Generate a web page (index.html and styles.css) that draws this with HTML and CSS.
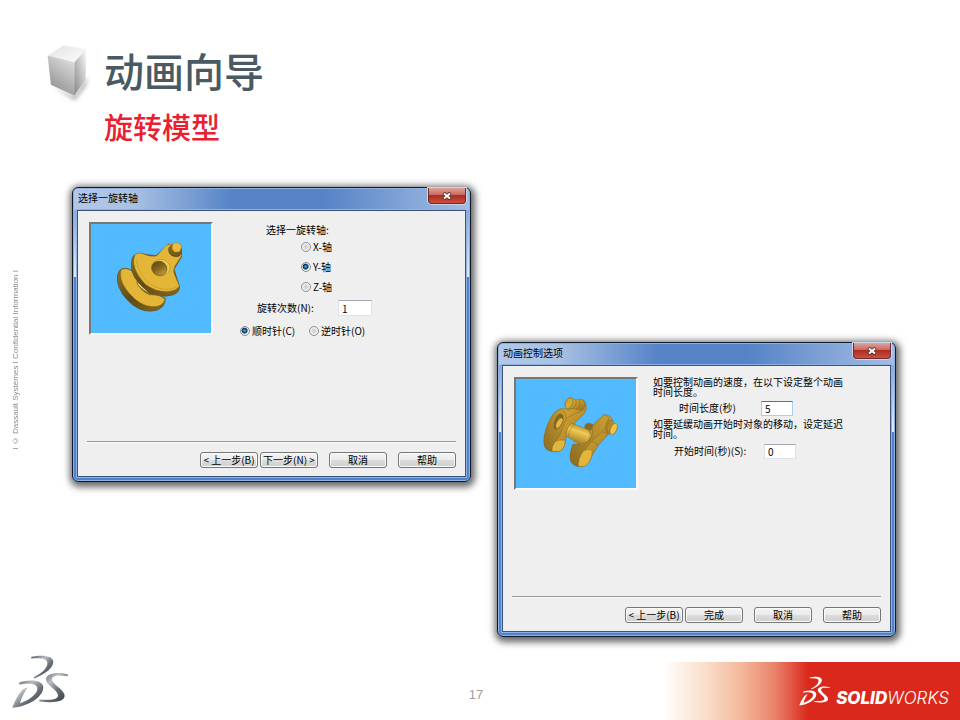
FILE: index.html
```html
<!DOCTYPE html>
<html lang="zh-CN">
<head>
<meta charset="utf-8">
<meta name="viewport" content="width=device-width, initial-scale=1">
<title>动画向导</title>
<link rel="stylesheet" href="styles.css">
</head>
<body>
<div class="slide">
  <aside class="rail">I © Dassault Systèmes I Confidential Information I</aside>

  <header class="heading">
    <svg class="cube" viewBox="40 35 140 190" aria-hidden="true">
      <defs>
        <linearGradient id="cubeTop" x1="0" y1="0" x2="1" y2="1"><stop offset="0" stop-color="#e2e2e2"/><stop offset="1" stop-color="#fdfdfd"/></linearGradient>
        <linearGradient id="cubeLeft" x1=".8" y1="0" x2=".3" y2="1"><stop offset="0" stop-color="#e0e0e0"/><stop offset="1" stop-color="#8e8e8e"/></linearGradient>
        <linearGradient id="cubeRight" x1="1" y1="0" x2="0" y2="1"><stop offset="0" stop-color="#fafafa"/><stop offset="1" stop-color="#858585"/></linearGradient>
        <filter id="soft" x="-30%" y="-30%" width="160%" height="160%"><feGaussianBlur stdDeviation="6"/></filter>
      </defs>
      <path d="M62 168 L130 200 L172 140 L164 168 L132 210Z" fill="#999" filter="url(#soft)"/>
      <path d="M50 76 L98 45 L166 57 L131 96Z" fill="url(#cubeTop)"/>
      <path d="M50 76 L131 96 L130 196 L60 164Z" fill="url(#cubeLeft)"/>
      <path d="M131 96 L166 57 L165 148 L130 196Z" fill="url(#cubeRight)"/>
    </svg>
    <div class="titles">
      <h1>动画向导</h1>
      <h2>旋转模型</h2>
    </div>
  </header>

  <main class="dialogs">
    <section class="dialog" aria-labelledby="axis-title">
      <div class="titlebar">
        <h3 id="axis-title">选择一旋转轴</h3>
        <button class="close" type="button" aria-label="关闭"><svg viewBox="0 0 10 8"><path d="M1.500 1 L8.500 7 M8.500 1 L1.500 7" stroke="#5a2a28" stroke-width="3.600"/><path d="M2 1.400 L8 6.600 M8 1.400 L2 6.600" stroke="#fff" stroke-width="2"/></svg></button>
      </div>
      <form class="client">
        <div class="body">
          <div class="preview">
            <svg viewBox="93 148 360 327" aria-hidden="true">
              <defs>
                <linearGradient id="edge" x1="0" y1="0" x2="1" y2="1"><stop offset="0" stop-color="#93752a"/><stop offset=".5" stop-color="#5d4a16"/><stop offset="1" stop-color="#8b6d1f"/></linearGradient>
                <linearGradient id="bore" x1="0" y1="0" x2="1" y2=".6"><stop offset="0" stop-color="#54420f"/><stop offset=".6" stop-color="#86691f"/><stop offset="1" stop-color="#c29a32"/></linearGradient>
              </defs>
              <path d="M178 288 Q190 275 212 285 L302 364 L316 371 Q316 397 292 406 Q255 418 218 391 Q178 358 172 320 Q170 299 178 288Z" fill="url(#edge)" stroke="#4c3d12" stroke-width="1.500"/>
              <path d="M184 285 Q200 277 217 290 L302 365 L315 373 Q311 390 292 395 Q260 401 227 375 Q190 343 183 312 Q180 294 184 285Z" fill="#e4b638" stroke="#7c611c" stroke-width="1.500"/>
              <path d="M226 318 Q250 344 286 362 L270 362 Q240 350 226 318Z" fill="#8b6c20"/>
              <path d="M235 327 Q249 345 265 350" fill="none" stroke="#f7df85" stroke-width="4"/>
              <path d="M220 244 Q234 230 256 239 L288 243 L326 208 L364 225 L365 246 L342 284 L359 336 Q358 354 340 360 Q305 372 268 354 Q225 322 216 290 Q211 258 220 244Z" fill="url(#edge)" stroke="#4c3d12" stroke-width="1.500"/>
              <path d="M226 238 Q240 231 256 240 Q274 247 290 244 L318 212 Q346 201 360 226 L365 243 L345 274 Q338 286 343 298 L358 335 Q350 347 330 350 Q290 355 256 329 Q226 298 221 266 Q221 248 226 238Z" fill="#e4b638" stroke="#8a6b20" stroke-width="1.500"/>
              <path d="M229 255 Q236 305 278 333 Q320 354 352 335" fill="none" stroke="#b58c2a" stroke-width="1.500"/>
              <ellipse cx="302" cy="279" rx="28" ry="25" fill="#efca58" stroke="#a47f26" stroke-width="1.500"/>
              <ellipse cx="298" cy="281" rx="23" ry="21" transform="rotate(25 298 281)" fill="url(#bore)" stroke="#66501a" stroke-width="2"/>
              <path d="M327 218 Q322 232 336 243 Q353 251 362 240 L364 219 L338 209Z" fill="#876820" stroke="#503f12" stroke-width="1.500"/>
              <path d="M328 227 Q340 242 361 236 M326 233 Q340 249 360 242" fill="none" stroke="#4b3c11" stroke-width="2"/>
              <path d="M337 210 L346 203 L361 207 L365 218 L359 231 L345 233 L336 222Z" fill="#eabd3d" stroke="#8a6b20" stroke-width="1.500"/>
            </svg>
          </div>
          <div class="fields axis">
            <fieldset class="axes">
              <legend>选择一旋转轴:</legend>
              <label><input type="radio" name="axis">X-轴</label>
              <label><input type="radio" name="axis" checked>Y-轴</label>
              <label><input type="radio" name="axis">Z-轴</label>
            </fieldset>
            <div class="turns">
              <label for="turns">旋转次数(N):</label>
              <input id="turns" type="text" value="1">
            </div>
            <div class="direction">
              <label><input type="radio" name="dir" checked>顺时针(C)</label>
              <label><input type="radio" name="dir">逆时针(O)</label>
            </div>
          </div>
        </div>
        <div class="actions">
          <div class="steps">
            <button type="button">&lt; 上一步(B)</button>
            <button type="button">下一步(N) &gt;</button>
          </div>
          <button type="button">取消</button>
          <button type="button">帮助</button>
        </div>
      </form>
    </section>

    <section class="dialog second" aria-labelledby="control-title">
      <div class="titlebar">
        <h3 id="control-title">动画控制选项</h3>
        <button class="close" type="button" aria-label="关闭"><svg viewBox="0 0 10 8"><path d="M1.500 1 L8.500 7 M8.500 1 L1.500 7" stroke="#5a2a28" stroke-width="3.600"/><path d="M2 1.400 L8 6.600 M8 1.400 L2 6.600" stroke="#fff" stroke-width="2"/></svg></button>
      </div>
      <form class="client">
        <div class="body">
          <div class="preview">
            <svg viewBox="81 132 360 327" aria-hidden="true">
              <defs>
                <linearGradient id="metal" x1="0" y1="0" x2="1" y2="1"><stop offset="0" stop-color="#e3b63e"/><stop offset=".5" stop-color="#c4972e"/><stop offset="1" stop-color="#94711f"/></linearGradient>
                <linearGradient id="face" x1="1" y1="0" x2="0" y2="1"><stop offset="0" stop-color="#cb9f34"/><stop offset="1" stop-color="#8c6b20"/></linearGradient>
                <linearGradient id="shaft" x1=".7" y1="0" x2=".3" y2="1"><stop offset="0" stop-color="#a37b20"/><stop offset=".4" stop-color="#f0c955"/><stop offset="1" stop-color="#936e1d"/></linearGradient>
              </defs>
              <g stroke="#6b531a" stroke-width="1" stroke-linejoin="round">
                <path d="M287 274 Q290 263 302 265 Q312 266 316 275 L306 296 L289 286Z" fill="#8b6b20"/>
                <path d="M214 221 Q226 217 240 226 L256 210 Q268 190 284 196 Q294 204 292 222 Q290 232 282 240 L252 270 L232 306 L226 332 Q220 346 208 350 Q184 354 168 338 Q162 322 166 300 Q172 268 188 243 Q200 226 214 221Z" fill="url(#metal)"/>
                <path d="M210 224 Q224 222 228 234 L232 250 L218 286 Q210 310 200 318 L192 332 L188 349 Q168 344 166 330 Q163 316 167 300 Q174 266 190 243 Q200 228 210 224Z" fill="url(#face)"/>
                <path d="M198 320 Q212 312 229 316 L226 334 Q220 346 208 350 L188 348 Q188 334 198 320Z" fill="#e2b53d"/>
                <path d="M232 250 Q262 232 288 222" fill="none"/>
                <path d="M216 236 Q202 238 196 262 Q192 280 200 283 Q214 280 221 260 Q226 242 216 236Z" fill="#866720"/>
                <path d="M212 250 Q222 246 222 256 Q216 276 203 281 Q197 272 203 262Z" fill="#e2b640"/>
                <path d="M236 190 Q252 185 256 194 L279 193 Q292 200 288 214 Q282 224 275 226 L255 220 L240 222 Q224 218 228 202Z" fill="url(#metal)"/>
                <ellipse cx="240" cy="205" rx="10" ry="17" transform="rotate(25 240 205)" fill="#d4a632"/>
                <path d="M260 194 Q266 211 249 223 M271 195 Q279 214 259 226" fill="none"/>
                <path d="M248 265 L302 286 Q314 306 296 327 L271 329 L231 302 Q231 280 248 265Z" fill="url(#shaft)"/>
                <path d="M257 269 Q239 283 239 304 M296 282 Q313 303 288 333" fill="none"/>
                <path d="M345 239 Q370 238 372 262 Q371 282 360 296 L330 328 L308 364 Q302 386 290 392 Q264 402 246 382 Q240 362 246 346 L252 328 L271 329 L297 321 L308 302 L303 289 L318 264Z" fill="url(#metal)"/>
                <path d="M345 239 Q360 240 358 256 Q354 276 340 290 L308 318 L288 346 L270 370 L268 394 Q248 390 244 374 Q243 358 247 342 L252 328 L280 331 L304 314 L310 298 L310 274Z" fill="url(#face)"/>
                <path d="M283 348 Q294 340 310 346 L308 364 Q302 386 290 392 Q280 396 268 394 Q266 372 283 348Z" fill="#e2b53d"/>
                <path d="M308 318 L328 330 M340 290 L358 298" fill="none"/>
                <path d="M356 256 Q374 252 374 263 L384 276 Q382 295 370 299 L352 291 Q345 273 356 256Z" fill="#b58b2a"/>
                <ellipse cx="374" cy="282" rx="9" ry="18" transform="rotate(24 374 282)" fill="#edc548"/>
                <path d="M363 258 Q350 271 357 293" fill="none"/>
              </g>
            </svg>
          </div>
          <div class="fields control">
            <p>如要控制动画的速度，在以下设定整个动画<br>时间长度。</p>
            <div class="duration">
              <label for="duration">时间长度(秒)</label>
              <input id="duration" class="focused" type="text" value="5">
            </div>
            <p>如要延缓动画开始时对象的移动，设定延迟<br>时间。</p>
            <div class="start">
              <label for="start">开始时间(秒)(S):</label>
              <input id="start" type="text" value="0">
            </div>
          </div>
        </div>
        <div class="actions">
          <div class="steps">
            <button type="button">&lt; 上一步(B)</button>
            <button type="button">完成</button>
          </div>
          <button type="button">取消</button>
          <button type="button">帮助</button>
        </div>
      </form>
    </section>
  </main>

  <footer class="footer">
    <svg class="ds" viewBox="30 40 180 170" role="img" aria-label="Dassault Systèmes">
      <defs>
        <linearGradient id="steel" x1="0" y1="0" x2="1" y2="1"><stop offset="0" stop-color="#4d5258"/><stop offset=".35" stop-color="#b9bec4"/><stop offset=".6" stop-color="#6a7077"/><stop offset="1" stop-color="#2f343a"/></linearGradient>
        <g id="ds-mark">
          <path d="M94 51 C130 43 160 49 160 66 C160 85 134 104 103 116 L101 112 C128 99 143 84 142 69 C141 56 124 54 94 56Z"/>
          <path d="M58 128 C92 117 130 121 130 143 C130 172 82 201 37 204 C44 184 56 161 68 149 L83 142 C73 158 63 176 60 190 C90 180 112 162 112 147 C112 130 88 130 57 134Z"/>
          <path d="M204 104 C170 95 138 101 138 119 C138 136 173 150 174 166 C174 180 150 181 118 179 L118 185 C160 190 193 187 194 168 C194 150 157 134 156 119 C156 106 176 105 203 109Z"/>
        </g>
      </defs>
      <use href="#ds-mark" fill="url(#steel)"/>
    </svg>
    <span class="page">17</span>
    <div class="brand">
      <svg viewBox="30 40 180 170" aria-hidden="true"><use href="#ds-mark" fill="#fff"/></svg>
      <span class="wordmark"><b>SOLID</b>WORKS</span>
    </div>
  </footer>
</div>
</body>
</html>
```
FILE: styles.css
```css
* {
  box-sizing: border-box;
}

body {
  margin: 0;
  background: #fff;
  font-family: "Liberation Sans", "Noto Sans CJK SC", sans-serif;
}

h1, h2, h3, p {
  margin: 0;
}

.slide {
  display: grid;
  grid-template-columns: 44px 1fr;
  grid-template-rows: auto 1fr auto;
  min-height: 100vh;
}

.rail {
  grid-column: 1;
  grid-row: 1 / -1;
  align-self: center;
  justify-self: start;
  margin-left: 10px;
  writing-mode: vertical-rl;
  transform: rotate(180deg);
  font-size: 8px;
  line-height: 12px;
  color: #8c8c8c;
  white-space: nowrap;
}

.heading {
  grid-column: 2;
  grid-row: 1;
  display: flex;
  align-items: flex-start;
  gap: 13px;
  padding-top: 42px;
}

.cube {
  width: 47px;
  height: 63px;
}

.titles {
  padding-top: 4px;
  font-family: "Noto Sans CJK SC", sans-serif;
}

h1 {
  font-size: 40px;
  line-height: 48px;
  font-weight: 500;
  color: #4a5a63;
}

h2 {
  margin-top: 14px;
  font-size: 29px;
  line-height: 36px;
  font-weight: 500;
  color: #e8202f;
}

.dialogs {
  grid-column: 2;
  grid-row: 2;
  display: flex;
  align-items: flex-start;
  gap: 26px;
  padding: 43px 60px 16px 28px;
}

.dialog {
  flex: 0 1 399px;
  display: flex;
  flex-direction: column;
  min-height: 295px;
  padding: 0 4px 4px;
  border: 1px solid #10192b;
  border-radius: 6px;
  background:
    linear-gradient(to right, #b3c8e7 0, #a9c1e4 60px, #5583c6 160px, #5583c6 250px, #86a7d8 340px, #a3bde3 100%) top / 100% 22px no-repeat,
    linear-gradient(#86a8da 22px, #e2ebf7 89px, #4f82cc 89px);
  box-shadow: inset 0 0 0 1px #8fb2e2, 1px 2px 7px 3px #666;
  font-family: "Noto Sans CJK SC", sans-serif;
  font-size: 10px;
  line-height: 10px;
  color: #000;
}

.second {
  margin-top: 155px;
}

.titlebar {
  display: flex;
  justify-content: space-between;
  align-items: flex-start;
  height: 22px;
  padding-left: 1px;
}

h3 {
  font-size: 10px;
  line-height: 20px;
  font-weight: 400;
}

.close {
  display: grid;
  place-items: center;
  width: 38px;
  height: 16px;
  padding: 0;
  border: 1px solid #6e2a2c;
  border-top: 0;
  border-radius: 0 0 4px 4px;
  background: linear-gradient(#dda49b, #c96a5f 45%, #ae2c20 50%, #c9503f);
  box-shadow: 0 0 0 1px #c9d6ec;
}

.close svg {
  width: 10px;
  height: 8px;
}

.client {
  flex: 1;
  display: flex;
  flex-direction: column;
  margin: 0;
  padding: 11px 9px 8px;
  border: 1px solid #3d5279;
  background: #efefef;
  box-shadow: 0 0 0 1px #8fb2e2;
}

.body {
  flex: 1;
  display: flex;
  align-items: flex-start;
}

.preview {
  flex: none;
  width: 124px;
  margin-left: 2px;
  border: 2px solid #fafafa;
  border-top-color: #777;
  border-left-color: #777;
  background: #52bbff;
}

.preview svg {
  display: block;
  width: 100%;
}

.fields {
  flex: 1;
}

fieldset {
  display: flex;
  flex-direction: column;
  margin: 0;
  padding: 0;
  border: 0;
}

legend {
  padding: 0 0 0 53px;
  line-height: 15px;
}

.fields label {
  display: flex;
  align-items: center;
  white-space: nowrap;
}

.axes label {
  height: 20px;
  padding-left: 88px;
}

input[type="radio"] {
  appearance: none;
  width: 10px;
  height: 10px;
  margin: 0 2px 0 0;
  border: 1px solid #8b8f94;
  border-radius: 50%;
  background: radial-gradient(#d2d2d2 20%, #f6f6f6 70%);
}

input[type="radio"]:checked {
  background: radial-gradient(circle at 45% 45%, #4fc0ea 0, #12486f 30%, #123653 40%, #e8eef2 55%);
}

input[type="text"] {
  height: 16px;
  padding: 0 3px;
  border: 1px solid #dfe2e8;
  border-top-color: #a5a8b0;
  border-radius: 0;
  background: #fff;
  font: inherit;
}

.turns,
.direction,
.duration,
.start {
  display: flex;
  align-items: center;
}

.turns {
  height: 22px;
  padding-left: 44px;
}

.turns label {
  width: 81px;
}

.turns input {
  width: 34px;
}

.direction {
  gap: 12px;
  height: 24px;
  padding-left: 27px;
}

.direction label {
  min-width: 57px;
}

.control {
  padding-left: 15px;
}

.control p {
  white-space: nowrap;
}

.control input {
  width: 32px;
  height: 15px;
}

.control .focused {
  border-color: #a9cdf0;
  border-top-color: #3d7bad;
}

.duration {
  height: 22px;
  padding-left: 26px;
}

.duration label {
  width: 82px;
}

.start {
  height: 24px;
  padding-left: 21px;
}

.start label {
  width: 90px;
}

.actions {
  display: flex;
  justify-content: flex-end;
  gap: 11px;
  padding-top: 10px;
  border-top: 1px solid #999;
  box-shadow: inset 0 1px #fafafa;
}

.steps {
  display: flex;
  gap: 2px;
}

.actions button {
  width: 58px;
  height: 16px;
  padding: 0;
  border: 1px solid #777;
  border-radius: 3px;
  background: linear-gradient(#f4f4f4, #ebebeb 50%, #dcdcdc 50%, #d0d0d0);
  box-shadow: inset 0 0 0 1px #fafafa;
  font: inherit;
  color: inherit;
  white-space: nowrap;
}

.footer {
  grid-column: 1 / -1;
  grid-row: 3;
  display: grid;
  grid-template-columns: 1fr auto 1fr;
  align-items: end;
}

.ds {
  width: 60px;
  height: 57px;
  margin: 0 0 10px 10px;
}

.page {
  padding: 0 8px 17px 0;
  font-size: 13px;
  line-height: 16px;
  color: #a0a0a0;
}

.brand {
  justify-self: end;
  display: flex;
  align-items: center;
  justify-content: flex-end;
  gap: 5px;
  width: 31vw;
  min-width: 298px;
  height: 58px;
  padding-right: 11px;
  background: linear-gradient(to right, #fff, #fae0cd 14%, #f3b799 27%, #e9826a 38%, #da291c 49%);
  color: #fff;
}

.brand svg {
  width: 33px;
  height: 32px;
}

.wordmark {
  padding-top: 14px;
  font-family: Inter, sans-serif;
  font-size: 17px;
  line-height: 18px;
  font-style: italic;
  font-weight: 300;
}

.wordmark b {
  font-weight: 800;
}
```
